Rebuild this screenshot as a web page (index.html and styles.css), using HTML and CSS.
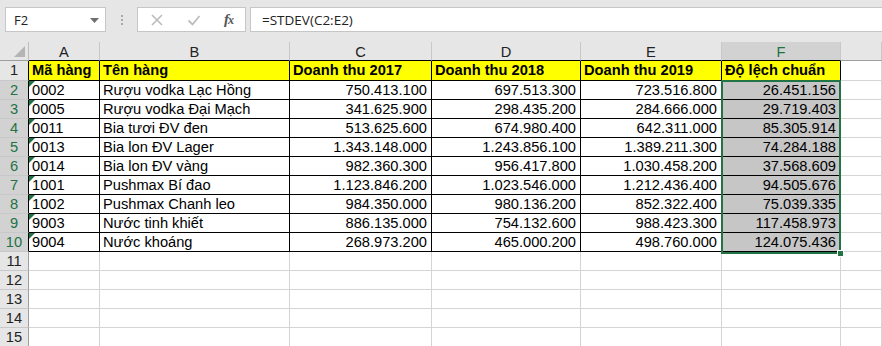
FILE: index.html
```html
<!DOCTYPE html>
<html>
<head>
<meta charset="utf-8">
<link rel="stylesheet" href="styles.css">
</head>
<body>
<div class="app">
  <div class="toolbar">
    <div class="namebox"><span>F2</span><svg class="dd" width="9" height="5" viewBox="0 0 9 5"><path d="M0 0H9L4.5 5Z" fill="#6e6e6e"/></svg></div>
    <div class="grip"><i></i><i></i><i></i></div>
    <div class="fxbtns">
      <svg class="ic" width="14" height="14" viewBox="0 0 14 14"><path d="M2 2L12 12M12 2L2 12" stroke="#bcbcbc" stroke-width="1.6"/></svg>
      <svg class="ic" width="14" height="14" viewBox="0 0 14 14"><path d="M1.5 7.5L5.5 11.5L12.5 3" stroke="#bcbcbc" stroke-width="1.8" fill="none"/></svg>
      <span class="fx">f<span class="fxx">x</span></span>
    </div>
    <div class="formula">=STDEV(C2:E2)</div>
  </div>
  <div class="sheet">
    <div class="corner"><span class="tri"></span></div>
    <div class="ch k">A</div><div class="ch k">B</div><div class="ch k">C</div><div class="ch k">D</div><div class="ch k">E</div><div class="ch k s">F</div><div class="ch"></div>

    <div class="rh k r1">1</div>
    <div class="c b y r1">Mã hàng</div><div class="c b y r1">Tên hàng</div><div class="c b y r1">Doanh thu 2017</div><div class="c b y r1">Doanh thu 2018</div><div class="c b y r1">Doanh thu 2019</div><div class="c b y r1">Độ lệch chuẩn</div><div class="c"></div>

    <div class="rh k s">2</div>
    <div class="c b t">0002</div><div class="c b">Rượu vodka Lạc Hồng</div><div class="c b n">750.413.100</div><div class="c b n">697.513.300</div><div class="c b n">723.516.800</div><div class="c b n g">26.451.156</div><div class="c"></div>

    <div class="rh k s">3</div>
    <div class="c b t">0005</div><div class="c b">Rượu vodka Đại Mạch</div><div class="c b n">341.625.900</div><div class="c b n">298.435.200</div><div class="c b n">284.666.000</div><div class="c b n g">29.719.403</div><div class="c"></div>

    <div class="rh k s">4</div>
    <div class="c b t">0011</div><div class="c b">Bia tươi ĐV đen</div><div class="c b n">513.625.600</div><div class="c b n">674.980.400</div><div class="c b n">642.311.000</div><div class="c b n g">85.305.914</div><div class="c"></div>

    <div class="rh k s">5</div>
    <div class="c b t">0013</div><div class="c b">Bia lon ĐV Lager</div><div class="c b n">1.343.148.000</div><div class="c b n">1.243.856.100</div><div class="c b n">1.389.211.300</div><div class="c b n g">74.284.188</div><div class="c"></div>

    <div class="rh k s">6</div>
    <div class="c b t">0014</div><div class="c b">Bia lon ĐV vàng</div><div class="c b n">982.360.300</div><div class="c b n">956.417.800</div><div class="c b n">1.030.458.200</div><div class="c b n g">37.568.609</div><div class="c"></div>

    <div class="rh k s">7</div>
    <div class="c b t">1001</div><div class="c b">Pushmax Bí đao</div><div class="c b n">1.123.846.200</div><div class="c b n">1.023.546.000</div><div class="c b n">1.212.436.400</div><div class="c b n g">94.505.676</div><div class="c"></div>

    <div class="rh k s">8</div>
    <div class="c b t">1002</div><div class="c b">Pushmax Chanh leo</div><div class="c b n">984.350.000</div><div class="c b n">980.136.200</div><div class="c b n">852.322.400</div><div class="c b n g">75.039.335</div><div class="c"></div>

    <div class="rh k s">9</div>
    <div class="c b t">9003</div><div class="c b">Nước tinh khiết</div><div class="c b n">886.135.000</div><div class="c b n">754.132.600</div><div class="c b n">988.423.300</div><div class="c b n g">117.458.973</div><div class="c"></div>

    <div class="rh k s">10</div>
    <div class="c b t">9004</div><div class="c b">Nước khoáng</div><div class="c b n">268.973.200</div><div class="c b n">465.000.200</div><div class="c b n">498.760.000</div><div class="c b n g">124.075.436</div><div class="c"></div>

    <div class="rh">11</div><div class="c"></div><div class="c"></div><div class="c"></div><div class="c"></div><div class="c"></div><div class="c"></div><div class="c"></div>
    <div class="rh">12</div><div class="c"></div><div class="c"></div><div class="c"></div><div class="c"></div><div class="c"></div><div class="c"></div><div class="c"></div>
    <div class="rh">13</div><div class="c"></div><div class="c"></div><div class="c"></div><div class="c"></div><div class="c"></div><div class="c"></div><div class="c"></div>
    <div class="rh">14</div><div class="c"></div><div class="c"></div><div class="c"></div><div class="c"></div><div class="c"></div><div class="c"></div><div class="c"></div>
    <div class="rh">15</div><div class="c"></div><div class="c"></div><div class="c"></div><div class="c"></div><div class="c"></div><div class="c"></div><div class="c"></div>

    <div class="sel"><span class="handle"></span></div>
  </div>
</div>
</body>
</html>
```

FILE: styles.css
```css
* { box-sizing: border-box; }
html, body { margin: 0; padding: 0; }
body {
  width: 882px;
  height: 346px;
  overflow: hidden;
  background: #e6e6e6;
  font-family: "Liberation Sans", Arial, sans-serif;
}
.app { display: flex; flex-direction: column; }

.toolbar {
  display: flex;
  align-items: stretch;
  height: 42px;
  padding: 7px 0 10px 5px;
}
.namebox {
  width: 101px;
  background: #fff;
  border: 1px solid #c6c6c6;
  display: flex;
  align-items: center;
  justify-content: space-between;
  padding: 0 6px 0 8px;
  font-family: "Open Sans", "Noto Sans", sans-serif;
  font-size: 13px;
  color: #222;
}
.namebox .dd { margin-top: 1px; }
.grip {
  width: 31px;
  display: flex;
  flex-direction: column;
  align-items: center;
  justify-content: center;
  gap: 2px;
}
.grip i {
  display: block;
  width: 2px;
  height: 2px;
  background: #a8a8a8;
}
.fxbtns {
  width: 109px;
  background: #fff;
  border: 1px solid #c6c6c6;
  display: flex;
  align-items: center;
  padding: 0 0 0 12px;
  gap: 23px;
}
.fx {
  font-family: "Liberation Serif", "DejaVu Serif", serif;
  font-style: italic;
  font-weight: bold;
  font-size: 15px;
  color: #555;
  margin-left: 0;
  letter-spacing: -1px;
}
.fxx { font-size: 12px; }
.formula {
  flex: 1;
  margin-left: 4px;
  background: #fff;
  border: 1px solid #c6c6c6;
  border-right: none;
  display: flex;
  align-items: center;
  padding-left: 11px;
  font-family: "Open Sans", "Noto Sans", sans-serif;
  font-size: 13.5px;
  color: #222;
}

.sheet {
  position: relative;
  display: grid;
  grid-template-columns: 29px 71px 190px 142px 149px 141px 119px 1fr;
  grid-template-rows: 19px 20px repeat(14, 19px);
  background: #fff;
  font-size: 14.67px;
}
.corner {
  position: relative;
  background: #e6e6e6;
  border-right: 1px solid #bcbcbc;
  border-bottom: 1px solid #9e9e9e;
}
.tri {
  position: absolute;
  right: 3px;
  bottom: 3px;
  width: 0;
  height: 0;
  border-left: 11px solid transparent;
  border-bottom: 11px solid #b4b4b4;
}
.ch {
  background: #e6e6e6;
  border-right: 1px solid #c8c8c8;
  border-bottom: 1px solid #9e9e9e;
  text-align: center;
  line-height: 19px;
  color: #222;
  padding-top: 1px;
}
.ch.k { border-bottom-color: #000; }
.ch.s { background: #d2d2d2; color: #217346; }
.rh {
  background: #e6e6e6;
  border-right: 1px solid #9e9e9e;
  border-bottom: 1px solid #c8c8c8;
  text-align: center;
  line-height: 18px;
  color: #222;
}
.rh.k { border-right-color: #000; }
.rh.s { background: #d2d2d2; color: #217346; }
.r1 { line-height: 19px; }

.c {
  position: relative;
  border-right: 1px solid #d4d4d4;
  border-bottom: 1px solid #d4d4d4;
  line-height: 18px;
  padding: 0 3px;
  white-space: nowrap;
  overflow: hidden;
  color: #000;
}
.c.b { border-right-color: #000; border-bottom-color: #000; }
.c.y { background: #ffff00; font-weight: bold; }
.c.n { text-align: right; padding-right: 4px; }
.c.g { background: #c6c6c6; }
.c.t::before {
  content: "";
  position: absolute;
  left: 0;
  top: 0;
  width: 0;
  height: 0;
  border-top: 6px solid #1e7145;
  border-right: 6px solid transparent;
}

.sel {
  position: absolute;
  left: 721px;
  top: 38px;
  width: 120px;
  height: 174px;
  border: 2px solid #217346;
  pointer-events: none;
}
.handle {
  position: absolute;
  right: -5px;
  bottom: -5px;
  width: 7px;
  height: 7px;
  background: #217346;
  border: 1px solid #fff;
}
```
